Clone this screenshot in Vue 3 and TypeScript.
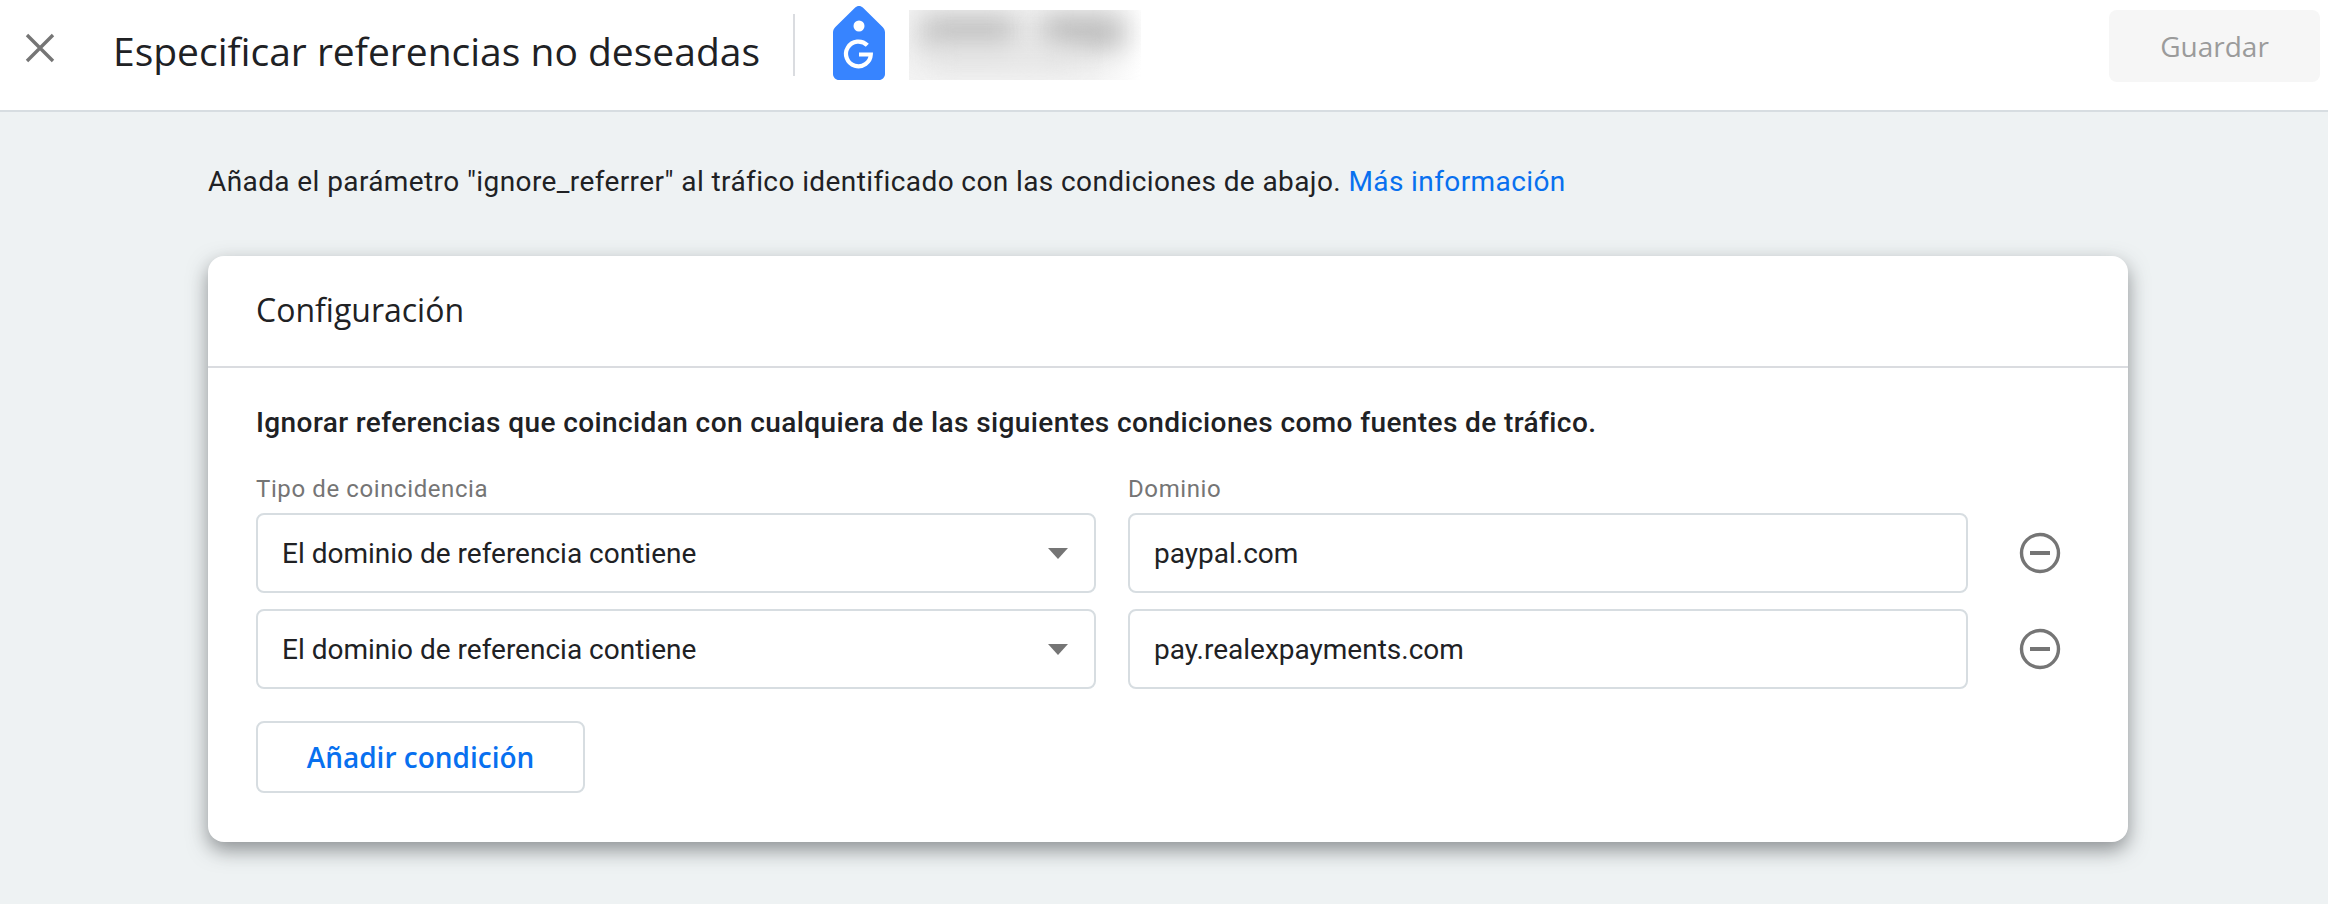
<template>
  <div class="page">
    <header class="topbar">
      <button class="close-btn" aria-label="Cerrar">
        <svg width="30" height="30" viewBox="0 0 30 30"><path d="M2 2 L28 28 M28 2 L2 28" stroke="#757575" stroke-width="3.4" fill="none" /></svg>
      </button>
      <h1 class="title">Especificar referencias no deseadas</h1>
      <div class="divider"></div>
      <svg class="tag" width="52" height="74" viewBox="0 0 52 74">
        <path d="M26 0c1.500 0 2.800.6 3.800 1.600L49.600 21c1.500 1.500 2.400 3.400 2.400 5.500V68c0 3.300-2.700 6-6 6H6c-3.300 0-6-2.700-6-6V26.500C0 24.400.9 22.500 2.400 21L22.200 1.600C23.200.6 24.500 0 26 0z" fill="#3784ff" />
        <circle cx="26" cy="20" r="5.500" fill="#fff" />
        <path d="M34.300 39.300A12.400 12.400 0 1 0 37.800 48.500H26" fill="none" stroke="#fff" stroke-width="4.200" />
      </svg>
      <div class="account">
        <div class="blur-a"></div>
        <div class="blur-b"></div>
        <div class="blur-c"></div>
      </div>
      <button class="save" disabled>Guardar</button>
    </header>

    <main class="content">
      <p class="intro">
        Añada el parámetro "ignore_referrer" al tráfico identificado con las condiciones de abajo.
        <a class="link">Más información</a>
      </p>

      <section class="card">
        <div class="card-header">Configuración</div>
        <div class="card-body">
          <p class="lead">Ignorar referencias que coincidan con cualquiera de las siguientes condiciones como fuentes de tráfico.</p>
          <div class="labels">
            <span>Tipo de coincidencia</span>
            <span>Dominio</span>
          </div>
          <div v-for="domain in domains" :key="domain" class="row">
            <div class="field select">
              <span>El dominio de referencia contiene</span>
              <i class="caret"></i>
            </div>
            <div class="field">{{ domain }}</div>
            <button class="remove" aria-label="Quitar">
              <svg width="42" height="42" viewBox="0 0 42 42">
                <circle cx="21" cy="21" r="18.500" fill="none" stroke="#757575" stroke-width="3.400" />
                <rect x="11" y="19" width="20" height="4" fill="#757575" />
              </svg>
            </button>
          </div>
          <button class="add">Añadir condición</button>
        </div>
      </section>
    </main>
  </div>
</template>

<script setup lang="ts">
const domains: string[] = ['paypal.com', 'pay.realexpayments.com']
</script>

<style>
html,
body {
  margin: 0;
  background: #eef2f3;
}
</style>

<style scoped>
.page {
  height: 904px;
  overflow: hidden;
  background: #eef2f3;
  font-family: Roboto, "Liberation Sans", sans-serif;
  color: #202124;
}

.topbar {
  display: flex;
  align-items: flex-start;
  height: 110px;
  background: #fff;
  border-bottom: 2px solid #d7dde1;
}

.close-btn {
  display: flex;
  align-items: center;
  justify-content: center;
  width: 30px;
  height: 30px;
  margin: 33px 0 0 25px;
  padding: 0;
  background: none;
  border: none;
}

.title {
  width: 650px;
  margin: 25px 0 0 58px;
  font-family: "Open Sans", sans-serif;
  font-size: 39px;
  line-height: 52px;
  font-weight: 400;
  white-space: nowrap;
}

.divider {
  width: 2px;
  height: 62px;
  margin: 14px 38px 0 30px;
  background: #dadce0;
}

.tag {
  margin-top: 6px;
  flex: none;
}

.account {
  position: relative;
  overflow: hidden;
  width: 232px;
  height: 70px;
  margin: 10px 0 0 24px;
  background: linear-gradient(to right, #f3f3f3 80%, #fff);
}

.blur-a,
.blur-b,
.blur-c {
  position: absolute;
  filter: blur(14px);
}

.blur-a {
  top: 6px;
  left: 12px;
  width: 96px;
  height: 32px;
  background: #bdbdbd;
}

.blur-b {
  top: 6px;
  left: 132px;
  width: 84px;
  height: 32px;
  background: #b8b8b8;
}

.blur-c {
  top: 38px;
  left: 20px;
  width: 150px;
  height: 20px;
  background: #e2e2e2;
}

.save {
  width: 211px;
  height: 72px;
  margin: 10px 8px 0 auto;
  background: #f6f6f6;
  border: none;
  border-radius: 8px;
  color: #9b9b9b;
  font-family: "Open Sans", sans-serif;
  font-size: 28px;
  font-weight: 500;
}

.content {
  padding: 0 200px 0 208px;
}

.intro {
  margin: 0;
  padding-top: 52px;
  font-size: 28px;
  letter-spacing: 0.4px;
  line-height: 36px;
}

.link {
  color: #0870ef;
}

.card {
  margin-top: 56px;
  height: 586px;
  background: #fff;
  border-radius: 16px;
  box-shadow: 0 8px 20px rgba(60, 64, 67, 0.55);
}

.card-header {
  height: 110px;
  padding-left: 48px;
  font-family: "Open Sans", sans-serif;
  font-size: 32px;
  line-height: 108px;
  border-bottom: 2px solid #dadce0;
}

.card-body {
  padding: 37px 48px 0;
}

.lead {
  margin: 0;
  font-size: 28px;
  font-weight: 500;
  letter-spacing: 0.4px;
  line-height: 36px;
}

.labels {
  display: grid;
  grid-template-columns: 840px 840px;
  gap: 32px;
  margin-top: 34px;
  font-size: 24px;
  letter-spacing: 0.6px;
  line-height: 28px;
  color: #757575;
}

.row {
  display: grid;
  grid-template-columns: 840px 840px 42px;
  gap: 32px;
  align-items: center;
  margin-top: 16px;
}

.labels + .row {
  margin-top: 10px;
}

.field {
  display: flex;
  align-items: center;
  justify-content: space-between;
  box-sizing: border-box;
  height: 80px;
  padding: 0 24px;
  font-size: 28px;
  border: 2px solid #d7dde1;
  border-radius: 8px;
}

.select {
  padding-right: 26px;
}

.caret {
  width: 0;
  height: 0;
  border-left: 10px solid transparent;
  border-right: 10px solid transparent;
  border-top: 11px solid #757575;
}

.remove {
  display: flex;
  width: 42px;
  height: 42px;
  margin-left: 19px;
  padding: 0;
  background: none;
  border: none;
}

.add {
  display: block;
  width: 329px;
  height: 72px;
  margin-top: 32px;
  background: #fff;
  border: 2px solid #d7dde1;
  border-radius: 8px;
  color: #0870ef;
  font-family: "Open Sans", sans-serif;
  font-size: 28px;
  font-weight: 600;
}
</style>
